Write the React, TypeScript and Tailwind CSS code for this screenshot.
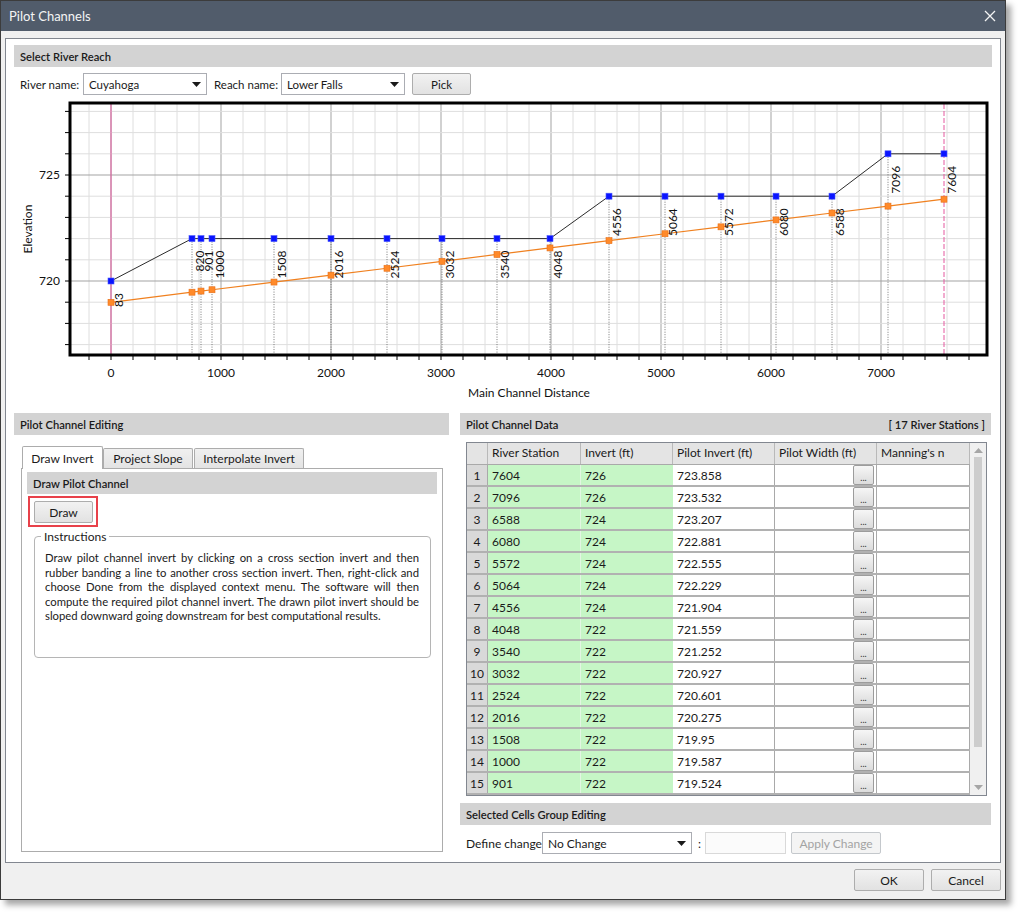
import React from "react";

const STATIONS = [83, 820, 901, 1000, 1508, 2016, 2524, 3032, 3540, 4048, 4556, 5064, 5572, 6080, 6588, 7096, 7604];

// measured x of each station on the profile (main channel distance is not station-linear)
const STATION_X: Record<number, number> = {
  83: 111, 820: 192, 901: 201, 1000: 212, 1508: 274, 2016: 331, 2524: 387, 3032: 442, 3540: 497,
  4048: 550, 4556: 609, 5064: 665, 5572: 721, 6080: 776, 6588: 832, 7096: 888, 7604: 944,
};

const ROWS: [number, number, string][] = [
  [7604, 726, "723.858"],
  [7096, 726, "723.532"],
  [6588, 724, "723.207"],
  [6080, 724, "722.881"],
  [5572, 724, "722.555"],
  [5064, 724, "722.229"],
  [4556, 724, "721.904"],
  [4048, 722, "721.559"],
  [3540, 722, "721.252"],
  [3032, 722, "720.927"],
  [2524, 722, "720.601"],
  [2016, 722, "720.275"],
  [1508, 722, "719.95"],
  [1000, 722, "719.587"],
  [901, 722, "719.524"],
];

function invertOf(s: number) {
  if (s === 83) return 720;
  if (s <= 4048) return 722;
  if (s <= 6588) return 724;
  return 726;
}

function pilotOf(s: number) {
  const row = ROWS.find((r) => r[0] === s);
  if (row) return parseFloat(row[2]);
  return 719.524 + (s - 901) * 0.000647;
}

const sx = (s: number) => STATION_X[s];
const dx = (d: number) => 111 + d * 0.11;
const ey = (e: number) => 281 - (e - 720) * 21.2;

function Triangle() {
  return (
    <svg width="9" height="5" viewBox="0 0 9 5" className="shrink-0">
      <path d="M0 0h9L4.5 5z" fill="#1a1a1a" />
    </svg>
  );
}

function Select({ value, w }: { value: string; w: string }) {
  return (
    <div className={`${w} h-[22px] border border-[#abadb3] bg-white flex items-center justify-between pl-[5px] pr-[5px]`}>
      <span>{value}</span>
      <Triangle />
    </div>
  );
}

function Button({ label, w, disabled }: { label: string; w: string; disabled?: boolean }) {
  return (
    <div
      className={`${w} h-[22px] flex items-center justify-center rounded-[2px] border ${
        disabled
          ? "border-[#c4c8cc] bg-[#f4f4f4] text-[#a3a3a3]"
          : "border-[#adadad] bg-gradient-to-b from-[#f2f2f2] to-[#e2e2e2] text-[#1a1a1a]"
      }`}
    >
      {label}
    </div>
  );
}

function Header({ children, h = "h-[22px]" }: { children: React.ReactNode; h?: string }) {
  return (
    <div className={`${h} bg-[#d3d3d3] flex items-center justify-between px-[6px] font-semibold text-[11.2px] text-[#1a1a1a]`}>
      {children}
    </div>
  );
}

function Profile() {
  const minorX: number[] = [];
  for (let d = -200; d <= 7800; d += 200) minorX.push(d);
  const elev: number[] = [];
  for (let e = 717; e <= 728; e++) elev.push(e);
  const inv = STATIONS.map((s) => `${sx(s)},${ey(invertOf(s))}`).join(" ");
  const pil = STATIONS.map((s) => `${sx(s)},${ey(pilotOf(s))}`).join(" ");

  return (
    <svg width="978" height="308" viewBox="14 98 978 308" className="block">
      {minorX.map((d) => (
        <line
          key={"v" + d}
          x1={dx(d)}
          x2={dx(d)}
          y1={104}
          y2={354}
          stroke={d % 1000 === 0 && d >= 0 ? "#a3a3a3" : "#dedede"}
          strokeWidth={1}
        />
      ))}
      {elev.map((e) => (
        <line
          key={"h" + e}
          x1={71}
          x2={987}
          y1={ey(e)}
          y2={ey(e)}
          stroke={e % 5 === 0 ? "#a3a3a3" : "#dedede"}
          strokeWidth={1}
        />
      ))}

      {/* station drop lines */}
      {STATIONS.slice(1, -1).map((s) => (
        <line
          key={"d" + s}
          x1={sx(s)}
          x2={sx(s)}
          y1={ey(invertOf(s)) + 3}
          y2={354}
          stroke="#555"
          strokeWidth={0.8}
          strokeDasharray="1 1.5"
        />
      ))}
      <line x1={111} x2={111} y1={104} y2={354} stroke="#e4589f" strokeWidth={1} />
      <line x1={sx(7604)} x2={sx(7604)} y1={104} y2={354} stroke="#e4589f" strokeWidth={1} strokeDasharray="5 2" />

      <polyline points={inv} fill="none" stroke="#2b2b2b" strokeWidth={1} />
      <polyline points={pil} fill="none" stroke="#f0801f" strokeWidth={1.2} />

      {STATIONS.map((s) => (
        <rect
          key={"o" + s}
          x={sx(s) - 3}
          y={ey(pilotOf(s)) - 3}
          width={6}
          height={6}
          fill="#ff8a2a"
          stroke="#e8701a"
          strokeWidth={0.6}
        />
      ))}
      {STATIONS.map((s) => (
        <rect
          key={"b" + s}
          x={sx(s) - 3}
          y={ey(invertOf(s)) - 3}
          width={6}
          height={6}
          fill="#0a14ff"
          stroke="#4a58ff"
          strokeWidth={0.6}
        />
      ))}
      {STATIONS.map((s) => {
        const x = sx(s) + 12;
        const y = ey(invertOf(s)) + 12;
        return (
          <text
            key={"t" + s}
            x={x}
            y={y}
            transform={`rotate(-90 ${x} ${y})`}
            textAnchor="end"
            fontSize={12}
            fill="#111"
          >
            {s}
          </text>
        );
      })}

      <rect x={70} y={103} width={917} height={252} fill="none" stroke="#000" strokeWidth={3} />

      {minorX.map((d) => (
        <line key={"bt" + d} x1={dx(d)} x2={dx(d)} y1={356} y2={360} stroke="#000" strokeWidth={1} />
      ))}
      {elev.map((e) => (
        <line key={"lt" + e} x1={65} x2={69} y1={ey(e)} y2={ey(e)} stroke="#000" strokeWidth={1} />
      ))}
      {[720, 725].map((e) => (
        <text key={"yl" + e} x={60} y={ey(e) + 4} textAnchor="end" fontSize={12} fill="#111">
          {e}
        </text>
      ))}
      {[0, 1000, 2000, 3000, 4000, 5000, 6000, 7000].map((d) => (
        <text key={"xl" + d} x={dx(d)} y={377} textAnchor="middle" fontSize={12} fill="#111">
          {d}
        </text>
      ))}
      <text x={32} y={229} transform="rotate(-90 32 229)" textAnchor="middle" fontSize={12} fill="#111">
        Elevation
      </text>
      <text x={529} y={397} textAnchor="middle" fontSize={12} fill="#111">
        Main Channel Distance
      </text>
    </svg>
  );
}

function Tab({ label, active, w, ml }: { label: string; active?: boolean; w: string; ml?: string }) {
  return active ? (
    <div className={`${w} ${ml ?? ""} h-[23px] -mb-px relative z-10 border border-b-0 border-[#acacac] bg-white rounded-t-[2px] flex items-center justify-center`}>
      {label}
    </div>
  ) : (
    <div className={`${w} ${ml ?? ""} h-[20px] border border-b-0 border-[#acacac] bg-gradient-to-b from-[#f0f0f0] to-[#e3e3e3] rounded-t-[2px] flex items-center justify-center`}>
      {label}
    </div>
  );
}

function DataGrid() {
  const cols = ["w-[21px]", "w-[93px]", "w-[92px]", "w-[102px]", "w-[102px]", "w-[93px]"];
  return (
    <div className="ml-[6px] mt-[7px] w-[521px] h-[354px] border border-[#828790] flex">
      <div className="w-[503px] flex flex-col">
        <div className="h-[23px] flex bg-[#e4e4e4] border-b border-[#a9a9a9]">
          {["", "River Station", "Invert (ft)", "Pilot Invert (ft)", "Pilot Width (ft)", "Manning's n"].map((h, i) => (
            <div key={i} className={`${cols[i]} h-full border-r border-[#b9b9b9] flex items-center pl-[4px] pb-[2px]`}>
              {h}
            </div>
          ))}
        </div>
        {ROWS.map((r, i) => (
          <div key={i} className="h-[22px] flex border-b-2 border-[#b1b1b1]">
            <div className={`${cols[0]} bg-[#d9d9d9] border-r border-[#a9a9a9] flex items-center justify-center pt-[1px]`}>{i + 1}</div>
            <div className={`${cols[1]} bg-[#c6f6c6] border-r border-[#e2f6e2] flex items-center pl-[4px] pt-[1px]`}>{r[0]}</div>
            <div className={`${cols[2]} bg-[#c6f6c6] flex items-center pl-[4px] pt-[1px]`}>{r[1]}</div>
            <div className={`${cols[3]} bg-white border-r border-[#a9a9a9] flex items-center pl-[4px] pt-[1px]`}>{r[2]}</div>
            <div className={`${cols[4]} bg-white border-r border-[#a9a9a9] flex items-start justify-end pr-[2px]`}>
              <div className="w-[21px] h-[20px] rounded-[2px] border border-[#9c9c9c] bg-gradient-to-b from-[#f6f6f6] to-[#dcdcdc] flex items-end justify-center text-[9px] leading-[12px] text-[#333]">
                ...
              </div>
            </div>
            <div className={`${cols[5]} bg-white border-r border-[#a9a9a9]`} />
          </div>
        ))}
      </div>
      <div className="w-[16px] bg-[#f0f0f0] flex flex-col items-center">
        <svg width="9" height="5" viewBox="0 0 9 5" className="mt-[5px]">
          <path d="M0 5h9L4.5 0z" fill="#a6a6a6" />
        </svg>
        <div className="mt-[4px] w-[8px] h-[290px] bg-[#cdcdcd]" />
        <svg width="9" height="5" viewBox="0 0 9 5" className="mt-[38px]">
          <path d="M0 0h9L4.5 5z" fill="#a6a6a6" />
        </svg>
      </div>
    </div>
  );
}

export default function App() {
  return (
    <div className="w-[1021px] h-[912px] bg-white text-[12px] leading-[15px] text-[#1a1a1a] font-[family-name:Lato,'Liberation_Sans',sans-serif]">
      <div className="w-[1006px] h-[900px] border border-[#3c3c3c] bg-[#f0f0f0] flex flex-col shadow-[5px_5px_6px_rgba(0,0,0,0.35)]">
        <div className="h-[30px] bg-[#515c6b] flex items-center justify-between pl-[8px] pr-[9px] text-[13px] text-[#f4f4f4]">
          <span>Pilot Channels</span>
          <svg width="12" height="12" viewBox="0 0 12 12">
            <path d="M1 1l10 10M11 1L1 11" stroke="#f4f4f4" strokeWidth="1.3" />
          </svg>
        </div>

        <div className="flex-1 pl-[4px] pt-[7px] flex flex-col">
          <div className="w-[996px] h-[825px] border border-[#828790] bg-white px-[8px] pt-[6px] flex flex-col">
            <Header>Select River Reach</Header>
            <div className="mt-[6px] h-[22px] flex items-center text-[11.5px]">
              <span className="ml-[6px] w-[63px]">River name:</span>
              <Select value="Cuyahoga" w="w-[124px]" />
              <span className="ml-[7px] w-[67px]">Reach name:</span>
              <Select value="Lower Falls" w="w-[124px]" />
              <div className="ml-[7px]">
                <Button label="Pick" w="w-[59px]" />
              </div>
            </div>

            <div className="mt-[3px]">
              <Profile />
            </div>

            <div className="mt-[7px] flex gap-[11px]">
              {/* left: editing */}
              <div className="w-[435px] flex flex-col">
                <Header>Pilot Channel Editing</Header>
                <div className="ml-[7px] mr-[6px] mt-[11px] flex flex-col">
                  <div className="h-[22px] flex items-end">
                    <Tab label="Draw Invert" active w="w-[81px]" ml="ml-[1px]" />
                    <Tab label="Project Slope" w="w-[90px]" />
                    <Tab label="Interpolate Invert" w="w-[110px]" ml="ml-[1px]" />
                  </div>
                  <div className="h-[384px] border border-[#acacac] bg-white flex flex-col">
                    <div className="mx-[5px] mt-[3px]">
                      <Header>Draw Pilot Channel</Header>
                    </div>
                    <div className="ml-[6px] mt-[2px] w-[70px] h-[31px] border-2 border-[#e8414a] pl-[4px] pt-[3px]">
                      <Button label="Draw" w="w-[59px]" />
                    </div>
                    <fieldset className="ml-[12px] mt-[2px] w-[397px] h-[129px] border border-[#b5b5b5] rounded-[4px]">
                      <legend className="ml-[6px] px-[3px] leading-[15px]">Instructions</legend>
                      <p className="pl-[10px] pr-[11px] mt-[7px] text-justify text-[11.3px] leading-[14.5px]">
                        Draw pilot channel invert by clicking on a cross section invert and then rubber banding a line
                        to another cross section invert. Then, right-click and choose Done from the displayed context
                        menu. The software will then compute the required pilot channel invert. The drawn pilot invert
                        should be sloped downward going downstream for best computational results.
                      </p>
                    </fieldset>
                  </div>
                </div>
              </div>

              {/* right: data */}
              <div className="w-[531px] flex flex-col">
                <Header>
                  <span>Pilot Channel Data</span>
                  <span>[ 17 River Stations ]</span>
                </Header>
                <DataGrid />
                <div className="mt-[7px]">
                  <Header>Selected Cells Group Editing</Header>
                </div>
                <div className="mt-[7px] h-[22px] flex items-center">
                  <span className="ml-[6px] w-[76px]">Define change</span>
                  <Select value="No Change" w="w-[150px]" />
                  <span className="ml-[6px] mr-[4px]">:</span>
                  <div className="w-[81px] h-[22px] border border-[#d9d9d9] bg-[#fbfbfb]" />
                  <div className="ml-[5px]">
                    <Button label="Apply Change" w="w-[90px]" disabled />
                  </div>
                </div>
              </div>
            </div>
          </div>

          <div className="mt-[6px] flex justify-end gap-[7px] pr-[4px]">
            <Button label="OK" w="w-[70px]" />
            <Button label="Cancel" w="w-[70px]" />
          </div>
        </div>
      </div>
    </div>
  );
}
